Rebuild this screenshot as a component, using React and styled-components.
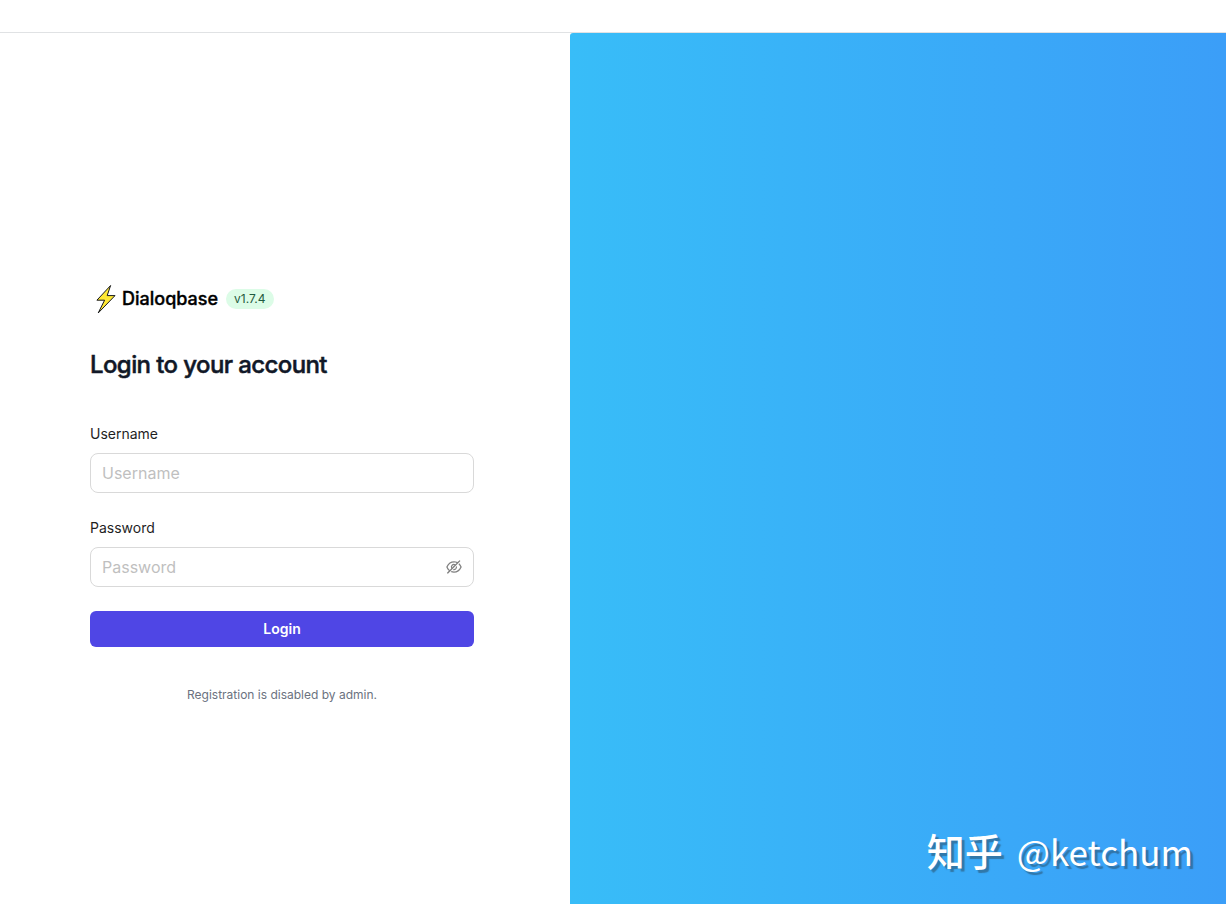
import React, { useState } from 'react';
import styled, { createGlobalStyle } from 'styled-components';
import { AiOutlineEye, AiOutlineEyeInvisible } from 'react-icons/ai';

const BoltLogo = () => (
  <StyledBolt viewBox="0 0 32 32" aria-hidden="true">
    <path
      d="M20.600 2.500L6.900 17.200L14.600 17.200L8.200 30L25 12.600L17.200 12.600z"
      fill="#ffe833"
      stroke="#16181d"
      strokeWidth="1"
      strokeLinejoin="round"
    />
  </StyledBolt>
);

const App = () => {
  const [isVisible, setIsVisible] = useState(false);
  const eyeIcon = isVisible ? <AiOutlineEye /> : <AiOutlineEyeInvisible />;

  return (
    <Page>
      <GlobalStyle />
      <TopBar />
      <Main>
        <LoginPanel>
          <Brand>
            <BoltLogo />
            <BrandName>Dialoqbase</BrandName>
            <Version>v1.7.4</Version>
          </Brand>
          <Title>Login to your account</Title>
          <Form onSubmit={(e) => e.preventDefault()}>
            <Field>
              <Label htmlFor="username">Username</Label>
              <InputBox>
                <Input id="username" type="text" placeholder="Username" />
              </InputBox>
            </Field>
            <Field>
              <Label htmlFor="password">Password</Label>
              <InputBox>
                <Input
                  id="password"
                  type={isVisible ? 'text' : 'password'}
                  placeholder="Password"
                />
                <EyeButton
                  type="button"
                  aria-label="Toggle password visibility"
                  onClick={() => setIsVisible(!isVisible)}>
                  {eyeIcon}
                </EyeButton>
              </InputBox>
            </Field>
            <SubmitButton type="submit">Login</SubmitButton>
          </Form>
          <Note>Registration is disabled by admin.</Note>
        </LoginPanel>
        <Cover>
          <Watermark>
            <strong>知乎</strong>
            <span>@ketchum</span>
          </Watermark>
        </Cover>
      </Main>
    </Page>
  );
};

const GlobalStyle = createGlobalStyle`
  *, *::before, *::after {
    box-sizing: border-box;
  }

  body {
    margin: 0;
    background: #fff;
    font-family: Inter, "Liberation Sans", sans-serif;
  }
`;

const Page = styled.div`
  display: flex;
  flex-direction: column;
  min-height: 100vh;
`;

const TopBar = styled.header`
  height: 33px;
  border-bottom: 1px solid #e0e2e4;
`;

const Main = styled.main`
  display: flex;
  flex: 1;
`;

const LoginPanel = styled.section`
  display: flex;
  flex-direction: column;
  justify-content: center;
  flex: 0 1 570px;
  padding: 48px 96px 0 90px;
`;

const Brand = styled.div`
  display: flex;
  align-items: center;
`;

const StyledBolt = styled.svg`
  width: 32px;
  height: 32px;
`;

const BrandName = styled.span`
  font-size: 18px;
  line-height: 28px;
  font-weight: 500;
  -webkit-text-stroke: thin #000;
  color: #000;
`;

const Version = styled.span`
  margin-left: 8px;
  padding: 2px 8px;
  border-radius: 10px;
  background: #dcfce7;
  color: #1f5a40;
  font-size: 12px;
  line-height: 16px;
`;

const Title = styled.h2`
  margin: 32px 0 0;
  font-size: 24px;
  line-height: 36px;
  font-weight: 500;
  -webkit-text-stroke: thin #111827;
  letter-spacing: -0.025em;
  color: #111827;
`;

const Form = styled.form`
  display: flex;
  flex-direction: column;
  gap: 24px;
  margin-top: 40px;
`;

const Field = styled.div`
  display: flex;
  flex-direction: column;
  gap: 8px;
`;

const Label = styled.label`
  font-size: 14px;
  line-height: 22px;
  color: #1f1f1f;
`;

const InputBox = styled.div`
  display: flex;
  align-items: center;
  height: 40px;
  padding: 0 10px 0 11px;
  border: 1px solid #d9d9d9;
  border-radius: 8px;
  background: #fff;
`;

const Input = styled.input`
  flex: 1;
  min-width: 0;
  padding: 0;
  border: 0;
  outline: none;
  background: transparent;
  font-family: inherit;
  font-size: 16px;
  line-height: 24px;
  color: #1f1f1f;

  &::placeholder {
    color: #bfbfbf;
  }
`;

const EyeButton = styled.button`
  display: flex;
  padding: 0;
  border: 0;
  background: none;
  color: #808080;
  font-size: 18px;
  cursor: pointer;
`;

const SubmitButton = styled.button`
  height: 36px;
  border: 0;
  border-radius: 6px;
  background: #4f46e5;
  color: #fff;
  font-family: inherit;
  font-size: 14px;
  font-weight: 600;
  cursor: pointer;
`;

const Note = styled.p`
  margin: 40px 0 0;
  font-size: 12px;
  line-height: 16px;
  text-align: center;
  color: #6b7280;
`;

const Cover = styled.section`
  display: flex;
  flex: 1;
  align-items: flex-end;
  justify-content: flex-end;
  padding: 24px 33px;
  border-top-left-radius: 3px;
  background: linear-gradient(to right, #38bdf8, #3b9ef8);
`;

const Watermark = styled.div`
  display: flex;
  align-items: baseline;
  gap: 14px;
  font-family: "Noto Sans CJK SC", sans-serif;
  font-size: 35px;
  line-height: 58px;
  color: #fff;
  text-shadow: 3px 3px 1px rgba(40, 70, 90, 0.5);

  strong {
    font-size: 38px;
    font-weight: 500;
  }
`;

export default App;
